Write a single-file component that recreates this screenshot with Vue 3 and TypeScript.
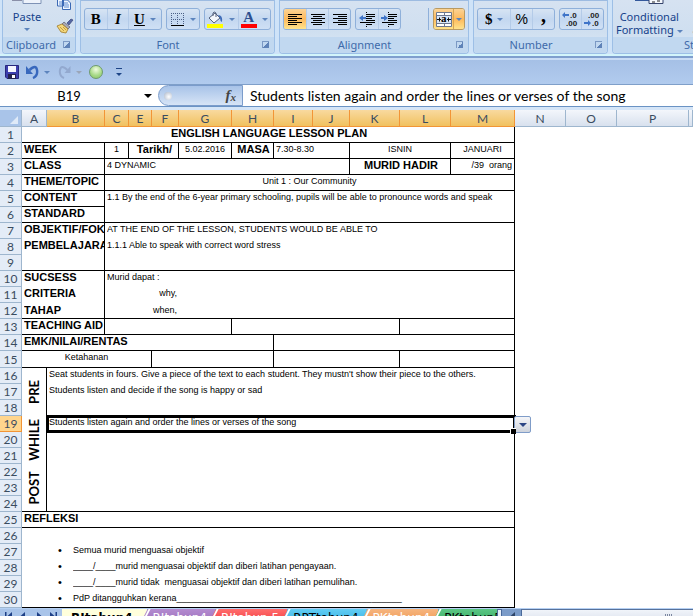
<script setup lang="ts">
interface Column { name: string; width: number; active: boolean }

const columns: Column[] = [
  { name: 'A', width: 25, active: false },
  { name: 'B', width: 58, active: true },
  { name: 'C', width: 24, active: true },
  { name: 'E', width: 23, active: true },
  { name: 'F', width: 27, active: true },
  { name: 'G', width: 53, active: true },
  { name: 'H', width: 42, active: true },
  { name: 'I', width: 39, active: true },
  { name: 'J', width: 37, active: true },
  { name: 'K', width: 50, active: true },
  { name: 'L', width: 51, active: true },
  { name: 'M', width: 64, active: true },
  { name: 'N', width: 51, active: false },
  { name: 'O', width: 51, active: false },
  { name: 'P', width: 72, active: false },
]

interface Cell { text?: string; span: number; rows?: number; cls?: string }

const rows: Cell[][] = [
  [{ text: 'ENGLISH LANGUAGE LESSON PLAN', span: 12, cls: 'b c r u' }],
  [
    { text: 'WEEK', span: 2, cls: 'b r u' },
    { text: '1', span: 1, cls: 'c r u' },
    { text: 'Tarikh/', span: 2, cls: 'b c r u' },
    { text: '5.02.2016', span: 1, cls: 'c r u' },
    { text: 'MASA', span: 1, cls: 'b c r u' },
    { text: '7.30-8.30', span: 2, cls: 'r u' },
    { text: 'ISNIN', span: 2, cls: 'c r u' },
    { text: 'JANUARI', span: 1, cls: 'c r u' },
  ],
  [
    { text: 'CLASS', span: 2, cls: 'b r u' },
    { text: '4 DYNAMIC', span: 7, cls: 'r u' },
    { text: 'MURID HADIR', span: 2, cls: 'b c r u' },
    { text: '/39  orang', span: 1, cls: 'e r u' },
  ],
  [
    { text: 'THEME/TOPIC', span: 2, cls: 'b r u' },
    { text: 'Unit 1 : Our Community', span: 10, cls: 'c r u' },
  ],
  [
    { text: 'CONTENT', span: 2, cls: 'b r u' },
    { text: '1.1 By the end of the 6-year primary schooling, pupils will be able to pronounce words and speak', span: 10, rows: 2, cls: 'r u' },
  ],
  [{ text: 'STANDARD', span: 2, cls: 'b r u' }],
  [
    { text: 'OBJEKTIF/FOK', span: 2, cls: 'b r' },
    { text: 'AT THE END OF THE LESSON, STUDENTS WOULD BE ABLE TO', span: 10, cls: 'r' },
  ],
  [
    { text: 'PEMBELAJARAN', span: 2, cls: 'b r' },
    { text: '1.1.1 Able to speak with correct word stress', span: 10, cls: 'r' },
  ],
  [{ span: 2, cls: 'r u' }, { span: 10, cls: 'r u' }],
  [{ text: 'SUCSESS', span: 2, cls: 'b r' }, { text: 'Murid dapat :', span: 10, cls: 'r' }],
  [
    { text: 'CRITERIA', span: 2, cls: 'b r' },
    { text: 'why,', span: 3, cls: 'e' },
    { span: 7, cls: 'r' },
  ],
  [
    { text: 'TAHAP', span: 2, cls: 'b r u' },
    { text: 'when,', span: 3, cls: 'e u' },
    { span: 7, cls: 'r u' },
  ],
  [
    { text: 'TEACHING AID', span: 2, cls: 'b r u' },
    { span: 4, cls: 'r u' },
    { span: 4, cls: 'r u' },
    { span: 2, cls: 'r u' },
  ],
  [{ text: 'EMK/NILAI/RENTAS', span: 7, cls: 'b r u' }, { span: 5, cls: 'r u' }],
  [
    { text: 'Ketahanan', span: 4, cls: 'c r u' },
    { span: 3, cls: 'r u' },
    { span: 3, cls: 'r u' },
    { span: 2, cls: 'r u' },
  ],
  [
    { text: 'PRE', span: 1, rows: 3, cls: 'stage r' },
    { text: 'Seat students in fours. Give a piece of the text to each student. They mustn\'t show their piece to the others.', span: 11, cls: 'r' },
  ],
  [{ text: 'Students listen and decide if the song is happy or sad', span: 11, cls: 'r' }],
  [{ span: 11, cls: 'r' }],
  [
    { text: 'WHILE', span: 1, rows: 3, cls: 'stage r' },
    { text: 'Students listen again and order the lines or verses of the song', span: 11, cls: 'selected r' },
  ],
  [{ span: 11, cls: 'r' }],
  [{ span: 11, cls: 'r' }],
  [{ text: 'POST', span: 1, rows: 3, cls: 'stage r u' }, { span: 11, cls: 'r' }],
  [{ span: 11, cls: 'r' }],
  [{ span: 11, cls: 'r u' }],
  [{ text: 'REFLEKSI', span: 12, cls: 'b r u' }],
  [{ span: 12, cls: 'r' }],
  [{ text: 'Semua murid menguasai objektif', span: 12, cls: 'bullet r' }],
  [{ text: '____/____murid menguasai objektif dan diberi latihan pengayaan.', span: 12, cls: 'bullet r' }],
  [{ text: '____/____murid tidak  menguasai objektif dan diberi latihan pemulihan.', span: 12, cls: 'bullet r' }],
  [{ text: 'PdP ditangguhkan kerana_____________________________________________', span: 12, cls: 'bullet r u' }],
]

const tabs = [
  { name: 'RItahun4', cls: 'current' },
  { name: 'RJtahun4', cls: 'purple' },
  { name: 'RJtahun 5', cls: 'red' },
  { name: 'RPTtahun4', cls: 'sky' },
  { name: 'PKtahun4', cls: 'orange' },
  { name: 'PKtahun5', cls: 'green' },
]

const lines = [14, 9, 14, 9, 14, 9]
const alignments = ['Align Left', 'Center', 'Align Right']
function lineStart(kind: number, w: number): number {
  return kind === 0 ? 1 : kind === 1 ? 1 + Math.floor((14 - w) / 2) : 15 - w
}
</script>

<template>
  <main class="app">
    <section class="ribbon" aria-label="Ribbon">
      <div class="group clipboard">
        <div class="body">
          <button class="paste" type="button">
            <svg width="32" height="5" viewBox="0 0 32 5"><path d="M1 0v1h10V0" fill="#8a8fa8" /><path d="M12 0v3.5h18V0" fill="#eef3fb" stroke="#7f93b6" /></svg>
            <span>Paste</span>
            <i class="caret"></i>
          </button>
          <div class="clips">
            <button type="button" aria-label="Copy">
              <svg width="18" height="11" viewBox="0 0 18 11"><path d="M1.500 0v6h6V0M6.500 0v9.500h8V3l-3-3z" fill="#eef5ff" stroke="#3b69b5" /><path d="M3 2h3M3 4h3M8 3h4M8 5h5M8 7h5" stroke="#5f8bd0" /></svg>
            </button>
            <button type="button" aria-label="Format Painter">
              <svg width="18" height="16" viewBox="0 0 18 16"><path d="M11 5l4-4 2 1-4 5z" fill="#5567a3" stroke="#39457a" stroke-width=".7" /><path d="M8 4l6 5-2 2-6-5z" fill="#a9a9b5" stroke="#5c5c6c" stroke-width=".7" /><path d="M6 6l6 5-2 4-5-1-4-6z" fill="#f3d77b" stroke="#a17a24" stroke-width=".8" /><path d="M4 9l4 4M7 9l3 3" stroke="#b98c30" stroke-width=".8" /></svg>
            </button>
          </div>
        </div>
        <footer>Clipboard<i class="launcher"></i></footer>
      </div>

      <div class="group font">
        <div class="body">
          <div class="set">
            <button type="button" class="serif">B</button>
            <button type="button" class="serif italic">I</button>
            <button type="button" class="serif w33"><u>U</u><i class="caret"></i></button>
          </div>
          <div class="set">
            <button type="button" class="w33" aria-label="Borders">
              <svg width="15" height="15" viewBox="0 0 15 15"><path d="M1 1.500h13M1 7.500h13M1.500 1v12M7.500 1v12M13.500 1v12" stroke="#4b5f86" stroke-dasharray="1 1" fill="none" /><path d="M1 13.500h13" stroke="#000" /></svg>
              <i class="caret"></i>
            </button>
          </div>
          <div class="set">
            <button type="button" class="w33" aria-label="Fill Color">
              <svg width="17" height="17" viewBox="0 0 17 17"><path d="M2 7l6-5 5 5-6 5z" fill="#f4f7fc" stroke="#54617d" /><path d="M6 5V2q1-2 3 0v4" fill="none" stroke="#54617d" /><path d="M11 4q5 0 4 7q-2-1-2-4z" fill="#3e6cb8" /><path d="M0 13h16v4H0z" fill="#ff0" /></svg>
              <i class="caret"></i>
            </button>
            <button type="button" class="w33 fontcolor" aria-label="Font Color">
              <span>A</span><i class="caret"></i>
            </button>
          </div>
        </div>
        <footer>Font<i class="launcher"></i></footer>
      </div>

      <div class="group alignment">
        <div class="body">
          <div class="set">
            <button v-for="(label, k) in alignments" :key="label" type="button" :class="{ on: k === 0 }" :aria-label="label">
              <svg width="16" height="13" viewBox="0 0 16 13"><rect v-for="(w, i) in lines" :key="i" :x="lineStart(k, w)" :y="i * 2 + 1" :width="w" height="1" /></svg>
            </button>
          </div>
          <div class="set">
            <button type="button" aria-label="Decrease Indent">
              <svg width="17" height="15" viewBox="0 0 17 15"><path d="M7 2.500h9M8 4.500h8M8 6.500h5M8 8.500h8M1 10.500h15M7 12.500h6" stroke="#000" /><path d="M7.500 0v15" stroke="#000" stroke-dasharray="1 1" /><path d="M0 6l4-3v2h3v2H4v2z" fill="#3f74c8" /></svg>
            </button>
            <button type="button" aria-label="Increase Indent">
              <svg width="17" height="15" viewBox="0 0 17 15"><path d="M7 2.500h9M8 4.500h8M8 6.500h5M8 8.500h8M1 10.500h15M7 12.500h6" stroke="#000" /><path d="M7.500 0v15" stroke="#000" stroke-dasharray="1 1" /><path d="M7 6L3 3v2H0v2h3v2z" fill="#3f74c8" /></svg>
            </button>
          </div>
          <i class="rule"></i>
          <div class="set merge">
            <button type="button" class="on w33" aria-label="Merge &amp; Center">
              <svg width="16" height="15" viewBox="0 0 16 15"><path d="M.500.500h15v14H.500z" fill="#fff" stroke="#6c7890" /><path d="M1 3.500h14M1 11.500h14M8.500 0v4M8.500 11v4" stroke="#6c7890" /><path d="M1 4h14v7H1z" fill="#d8e5f8" /><path d="M1 7.500h4M11 7.500h4M3.500 5.500v4M12.500 5.500v4" stroke="#111" /><text x="5" y="10" font-family="Liberation Serif, serif" font-weight="bold" font-size="11">a</text></svg>
            </button>
            <button type="button" class="on arrow" aria-label="Merge options"><i class="caret"></i></button>
          </div>
        </div>
        <footer>Alignment<i class="launcher"></i></footer>
      </div>

      <div class="group number">
        <div class="body">
          <div class="set">
            <button type="button" class="serif w33">$<i class="caret"></i></button>
            <button type="button" class="pct">%</button>
            <button type="button" class="serif comma">,</button>
          </div>
          <div class="set">
            <button type="button" class="dec" aria-label="Increase Decimal">
              <svg width="17" height="16" viewBox="0 0 17 16"><path d="M0 4l3-3v2h4v2H3v2z" fill="#3f74c8" /><text x="8" y="7">.0</text><text x="4" y="15">.00</text></svg>
            </button>
            <button type="button" class="dec" aria-label="Decrease Decimal">
              <svg width="17" height="16" viewBox="0 0 17 16"><path d="M7 12L4 9v2H0v2h4v2z" fill="#3f74c8" /><text x="4" y="7">.00</text><text x="8" y="15">.0</text></svg>
            </button>
          </div>
        </div>
        <footer>Number<i class="launcher"></i></footer>
      </div>

      <div class="group styles">
        <div class="body">
          <button type="button" class="cond">
            <svg width="32" height="6" viewBox="0 0 32 6"><path d="M2 0h14v1H2z" fill="#34589b" /><path d="M16 0v3.500h14V0" fill="#f5f8fd" stroke="#34436b" /><path d="M19 2h3M24 1h3" stroke="#222" /></svg>
            <span>Conditional</span>
            <span>Formatting <i class="caret"></i></span>
          </button>
          <span class="next">as</span>
        </div>
        <footer>Styles</footer>
      </div>
    </section>

    <nav class="quick" aria-label="Quick Access Toolbar">
      <button type="button" aria-label="Save">
        <svg width="14" height="14" viewBox="0 0 14 14"><path d="M.500.500h13v13H2l-1.500-1.500z" fill="#3c3fae" stroke="#27277d" /><path d="M3 1h8v6H3z" fill="#f4f6ff" /><path d="M3 9h8v5H3z" fill="#23234f" /><path d="M7 10h3v3H7z" fill="#fff" /></svg>
      </button>
      <button type="button" class="undo" aria-label="Undo">
        <svg width="13" height="14" viewBox="0 0 13 14"><path d="M3.500 5Q10-1 11 5t-4 8" fill="none" stroke="#3868bd" stroke-width="2.400" /><path d="M0 1v8h7z" fill="#3868bd" /></svg>
      </button>
      <i class="caret"></i>
      <button type="button" class="redo" aria-label="Redo">
        <svg width="13" height="14" viewBox="0 0 13 14"><path d="M9.500 5Q3-1 2 5t4 8" fill="none" stroke="#93a9cf" stroke-width="2" /><path d="M12.500 1v7h-6z" fill="#93a9cf" /></svg>
      </button>
      <i class="caret dim"></i>
      <button type="button" class="orb" aria-label="Record"></button>
      <button type="button" class="more" aria-label="Customize Quick Access Toolbar"><i class="caret"></i></button>
    </nav>

    <div class="formula">
      <input class="name" type="text" value="B19" aria-label="Name Box" />
      <i class="caret black"></i>
      <div class="fx"><i class="knob"></i><button type="button" aria-label="Insert Function">f<sub>x</sub></button></div>
      <input class="entry" type="text" value="Students listen again and order the lines or verses of the song" aria-label="Formula Bar" />
    </div>

    <div class="sheet">
      <table>
        <colgroup>
          <col class="rowcol" />
          <col v-for="c in columns" :key="c.name" :style="{ width: c.width + 'px' }" />
          <col />
        </colgroup>
        <thead>
          <tr>
            <th class="corner" aria-label="Select All"><i></i></th>
            <th v-for="c in columns" :key="c.name" scope="col" :class="{ active: c.active }">{{ c.name }}</th>
            <th></th>
          </tr>
        </thead>
        <tbody>
          <tr v-for="(cells, r) in rows" :key="r" :class="{ tall: r === 14, low: r === 11 }">
            <th scope="row" :class="{ active: r === 18 }">{{ r + 1 }}</th>
            <td v-for="(cell, i) in cells" :key="i" :colspan="cell.span" :rowspan="cell.rows ?? 1" :class="cell.cls">
              <span v-if="cell.text">{{ cell.text }}</span>
              <button v-if="cell.cls?.startsWith('selected')" type="button" class="drop" aria-label="Choose value"><i class="caret"></i></button>
            </td>
          </tr>
        </tbody>
      </table>
    </div>

    <footer class="bottom">
      <div class="arrows">
        <button type="button" aria-label="First sheet"><svg width="9" height="9" viewBox="0 0 9 9"><path d="M1 0h1.500v9H1zM8 0v9L3 4.500z" /></svg></button>
        <button type="button" aria-label="Previous sheet"><svg width="9" height="9" viewBox="0 0 9 9"><path d="M6 0v9L1 4.500z" /></svg></button>
        <button type="button" aria-label="Next sheet"><svg width="9" height="9" viewBox="0 0 9 9"><path d="M3 0v9l5-4.500z" /></svg></button>
        <button type="button" aria-label="Last sheet"><svg width="9" height="9" viewBox="0 0 9 9"><path d="M6.500 0H8v9H6.500zM1 0v9l5-4.500z" /></svg></button>
      </div>
      <div class="tabs"><button v-for="t in tabs" :key="t.name" type="button" :class="['tab', t.cls]">{{ t.name }}</button></div>
      <div class="scroll">
        <i class="split"></i>
        <button type="button" class="left" aria-label="Scroll left"><svg width="5" height="9" viewBox="0 0 5 9"><path d="M5 0v9L0 4.500z" fill="#2d4467" /></svg></button>
        <div class="thumb"><i></i></div>
      </div>
    </footer>
  </main>
</template>

<style>
body { margin: 0; background: #fff; overflow: hidden; }
</style>

<style scoped>
* { box-sizing: border-box; }
.app { height: 100vh; display: flex; flex-direction: column; overflow: hidden; background: #fff; color: #000; font-family: "Liberation Sans", Arial, sans-serif; }
.app > * { flex-shrink: 0; }
button { margin: 0; padding: 0; border: 0; background: none; font: inherit; color: inherit; }
svg { display: block; }
.caret { display: inline-block; width: 0; height: 0; border: 3px solid transparent; border-top-color: #5c84bd; border-bottom: 0; }

.ribbon { display: flex; gap: 4px; height: 58px; padding: 0 0 4px 2px; overflow: hidden; background: #cfe3f8; border-bottom: 2px solid #7f9fce; box-shadow: inset 0 -2px #d3f5fb; font-family: "Noto Sans", "Open Sans", sans-serif; }
.group { display: flex; flex-direction: column; height: 54px; border: 1px solid #9dbfe6; border-top: 0; border-radius: 0 0 4px 4px; background: linear-gradient(#d6e2f1, #cfdff0 60%, #dbe8f6); overflow: hidden; flex-shrink: 0; }
.body { flex: 1; min-height: 0; display: flex; align-items: flex-start; gap: 4px; padding: 7px 3px 0; border-top: 1px solid #9dbbe1; }
.group footer { position: relative; height: 16px; line-height: 15px; font-size: 11px; text-align: center; color: #3e6aaa; background: #c1d8f0; padding-right: 19px; }
.clipboard { width: 74px; }
.font { width: 195px; }
.alignment { width: 190px; }
.number { width: 135px; }
.styles { flex: 1; min-width: 81px; border-right: 0; border-bottom-right-radius: 0; }
.launcher { position: absolute; right: 5px; top: 4px; width: 7px; height: 7px; border: 1px solid #7b99c4; border-right: 0; border-bottom: 0; background: linear-gradient(135deg, transparent 50%, #5f83b8 50%); }
.clipboard .body { padding: 0 1px; border-top: 0; justify-content: space-between; }
.clipboard footer { padding-right: 16px; }
.paste { display: flex; flex-direction: column; align-items: center; width: 46px; font-size: 11px; line-height: 13px; gap: 5px; color: #15428b; }
.clips { display: flex; flex-direction: column; gap: 7px; }
.set { display: flex; height: 22px; border: 1px solid #8fb0da; border-radius: 3px; background: linear-gradient(#d7e4f3, #c3d7f0 50%, #cfe0f5); overflow: hidden; }
.set button { display: flex; align-items: center; justify-content: center; gap: 5px; width: 22px; height: 20px; border-left: 1px solid #b4cbe8; }
.set button:first-child { border-left: 0; }
.set button.w33 { width: 33px; }
.set .on { background: linear-gradient(#fcd394, #fdb95c 50%, #ffe38c); }
.serif { font-family: "Liberation Serif", serif; font-size: 15px; font-weight: bold; }
.italic { font-style: italic; }
.fontcolor span { font: bold 15px/13px "Liberation Serif", serif; color: #2d4f8f; border-bottom: 4px solid #f00; width: 16px; height: 17px; }
.rule { width: 1px; height: 22px; margin-left: auto; background: #8fb0da; }
.merge { border-color: #b99a62; }
.merge button.w33 { width: 19px; }
.set button.arrow { width: 11px; border-left-color: #d9a651; }
.pct { font: 14px "Liberation Sans", sans-serif; }
.set .comma { font-size: 20px; line-height: 8px; padding-bottom: 8px; }
.dec text { font: bold 8px "Liberation Sans", sans-serif; fill: #222; }
.styles .body { padding: 0 3px; gap: 10px; border-top: 0; }
.cond { display: flex; flex-direction: column; align-items: center; font-size: 11px; line-height: 13px; color: #15428b; }
.cond svg { margin-bottom: 4px; }
.cond span { white-space: nowrap; }
.cond .caret { vertical-align: middle; }
.next { font-size: 11px; line-height: 13px; color: #15428b; margin-top: 23px; }
.styles footer { padding-left: 71px; text-align: left; }

.quick { display: flex; align-items: center; height: 27px; padding: 0 5px; background: linear-gradient(#a5c0e6, #b1cbee); border-top: 2px solid #c9dcf5; border-bottom: 1px solid #7f9fc9; }
.undo { margin-left: 7px; margin-right: 5px; }
.redo { margin-left: 8px; margin-right: 5px; }
.dim { border-top-color: #9aa5b8; }
.orb { width: 14px; height: 14px; margin-left: 7px; border-radius: 50%; border: 1px solid #6e9a6e; background: radial-gradient(circle at 50% 30%, #f0fbe0, #a4d884 60%, #8cc468); }
.more { margin-left: 13px; border-top: 1px solid #1d4486; padding-top: 2px; line-height: 0; }
.more .caret { border-top-color: #1d4486; }

.formula { display: flex; align-items: center; height: 22px; background: #fff; border-bottom: 1px solid #6a93c4; font-family: Lato, "Open Sans", sans-serif; font-size: 14px; }
.formula input { border: 0; padding: 0; margin: 0; background: none; outline: none; font: inherit; height: 20px; }
.formula .name { width: 138px; text-align: center; font-size: 13px; }
.formula .entry { flex: 1; min-width: 0; padding-left: 7px; }
.black { border-width: 4px 4px 0; border-top-color: #000; margin: 0 6px; }
.fx { display: flex; align-items: center; justify-content: space-between; width: 85px; height: 21px; padding: 0 6px 0 5px; border: 1px solid #7b9ccb; border-radius: 11px 0 0 11px; background: linear-gradient(#a8c3e8, #d6e4f6); }
.knob { width: 8px; height: 8px; border-radius: 50%; background: radial-gradient(circle at 60% 60%, #fff, #a7b3c6); }
.fx button { font: italic bold 15px/15px "Liberation Serif", serif; color: #444; }
.fx sub { font-size: 11px; line-height: 0; vertical-align: -1px; }

.sheet { flex: 1 0 auto; border-top: 3px solid #d5e5f7; }
table { width: 100%; table-layout: fixed; border-collapse: separate; border-spacing: 0; }
.rowcol { width: 22px; }
thead th { height: 17px; padding: 0; font: 12px/15px Lato, "Open Sans", sans-serif; color: #3a4c60; background: linear-gradient(#f3f6fb, #d8e1ee); border-right: 1px solid #9eb6ce; border-bottom: 1px solid #9eb6ce; }
thead th.active { background: linear-gradient(#f9d99f, #f1c15f); border-right-color: #f29536; border-bottom-color: #f29536; }
thead .corner { background: #a9c4e9; position: relative; }
.corner i { position: absolute; right: 3px; bottom: 2px; border-left: 8px solid transparent; border-bottom: 8px solid #dfeaf8; }
tbody tr { height: 16px; }
tbody tr.tall { height: 17px; }
tbody th { padding: 0; height: 16px; font: 12px/15px Lato, "Open Sans", sans-serif; color: #3a4c60; background: #e4ecf7; border-right: 1px solid #9eb6ce; border-bottom: 1px solid #9eb6ce; }
tbody th.active { background: #ffd58d; border-color: #f29536; }
td { position: relative; padding: 0 2px; vertical-align: top; font-size: 9px; line-height: 13px; height: 16px; }
td span { display: block; white-space: pre; overflow: hidden; height: 15px; }
.low td span { padding-top: 1px; }
.r { border-right: 1px solid #000; }
.u { border-bottom: 1px solid #000; }
.b { padding-right: 0; font-size: 11px; font-weight: bold; line-height: 13px; }
.c { text-align: center; }
.e { text-align: right; }
.stage { padding: 0; text-align: center; vertical-align: middle; font: bold 13px/16px Lato, sans-serif; }
.stage span { writing-mode: vertical-rl; transform: rotate(180deg); height: auto; margin: 0 auto; }
.selected { outline: 3px solid #000; outline-offset: -2px; }
.selected::after { content: ""; position: absolute; right: -2px; bottom: -2px; width: 5px; height: 5px; background: #000; border: solid #fff; border-width: 1px 0 0 1px; }
.drop { position: absolute; left: 100%; top: 0; width: 17px; height: 17px; border: 1px solid #7f9cc8; border-radius: 2px; background: linear-gradient(#f4f5f8, #ced3dc); line-height: 0; }
.drop .caret { border-width: 4px 4px 0; border-top-color: #2c4685; }
td.bullet { padding-left: 51px; }
.bullet::before { content: "•"; position: absolute; left: 36px; font-size: 11px; }

.bottom { display: flex; height: 18px; margin-bottom: -9px; background: #7b9bc8; border-top: 1px solid #b5d0f3; overflow: hidden; font: 12px/14px "DejaVu Sans", sans-serif; }
.arrows { display: flex; align-items: flex-start; gap: 6px; width: 62px; flex-shrink: 0; padding: 3px 4px; background: #a9c4e9; fill: #1d3f86; }
.tabs { display: flex; align-items: flex-start; width: 435px; overflow: hidden; }
.tab { position: relative; flex-shrink: 0; height: 18px; padding: 0 8px 0 14px; margin-right: -6px; color: #fff; white-space: nowrap; clip-path: polygon(9px 0, 100% 0, 100% 100%, 0 100%); margin-left: 0; }
.tab + .tab { margin-left: -2px; }
.tab + .tab::before { content: ""; position: absolute; left: 5px; top: 0; width: 2px; height: 18px; background: #fff; transform: skewX(-27deg); }
.current { padding-left: 9px; padding-right: 14px; clip-path: none; background: #ffffdc; color: #000; font-weight: bold; }
.purple { background: linear-gradient(#b48bd0, #9468b6); }
.red { background: linear-gradient(#ff6e6e, #f02c30); }
.sky { background: linear-gradient(#62cdf3, #2aa9df); color: #000; }
.orange { background: linear-gradient(#f6b57e, #ee9148); }
.green { background: linear-gradient(#5cc684, #2aa457); color: #000; }
.scroll { flex: 1; display: flex; }
.split { width: 5px; background: #e9f0fa; border: 1px solid #4a6a9b; }
.left { width: 19px; padding: 3px 0 0 8px; display: flex; }
.thumb { flex: 1; display: flex; justify-content: flex-end; background: linear-gradient(#f1f4fa, #d4dbe8); border-left: 1px solid #4a6a9b; border-top: 1px solid #57719a; padding: 4px 20px 0 0; }
.thumb i { width: 8px; height: 8px; background: repeating-linear-gradient(90deg, #7b86a0 0 1px, transparent 1px 2px); }
</style>
